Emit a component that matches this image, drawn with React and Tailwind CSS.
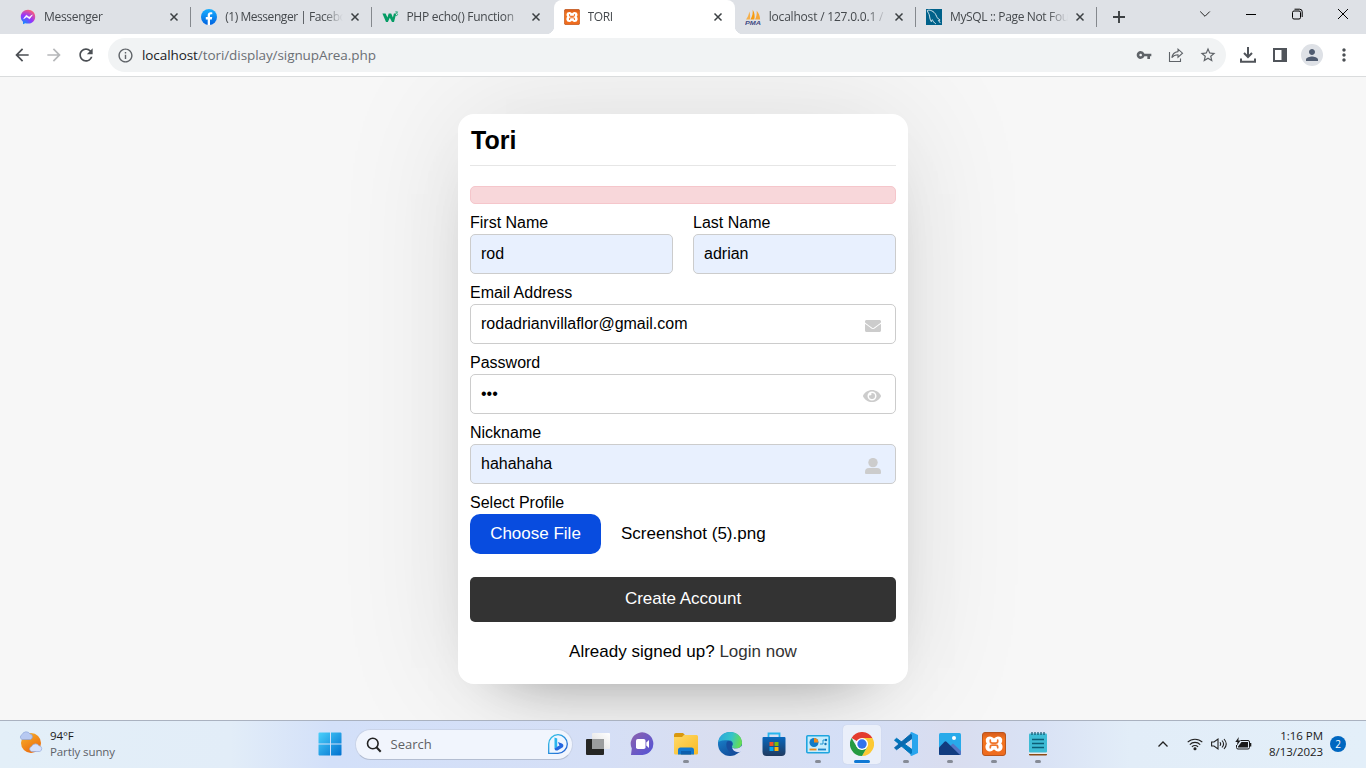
import React from "react";
import { MdArrowBack, MdArrowForward, MdRefresh, MdInfoOutline, MdVpnKey, MdStarBorder, MdPerson, MdMoreVert } from "react-icons/md";
import { FaEnvelope, FaEye } from "react-icons/fa";

function MessengerIcon() {
  return (
    <svg width="16" height="16" viewBox="0 0 16 16">
      <defs>
        <radialGradient id="msg" cx="0.2" cy="1" r="1.1">
          <stop offset="0" stopColor="#0695ff" />
          <stop offset="0.55" stopColor="#9334ff" />
          <stop offset="1" stopColor="#ff5f72" />
        </radialGradient>
      </defs>
      <path d="M8 .8C3.900.8.8 3.800.8 7.700c0 2.100.9 3.900 2.200 5.100v2.500l2.100-1.100c.9.300 1.900.4 2.900.4 4.100 0 7.200-2.900 7.200-6.900S12.100.8 8 .8z" fill="url(#msg)" />
      <path d="M3.700 9.700l2.600-3.500 2.800 2.100 3.200-2.400-2.700 3.900-2.800-2z" fill="#fff" stroke="#fff" strokeWidth=".7" strokeLinejoin="round" />
    </svg>
  );
}

function FacebookIcon() {
  return (
    <svg width="16" height="16" viewBox="0 0 16 16">
      <defs>
        <linearGradient id="fb" x1="0" y1="0" x2="0" y2="1">
          <stop offset="0" stopColor="#19afff" />
          <stop offset="1" stopColor="#0062e0" />
        </linearGradient>
      </defs>
      <circle cx="8" cy="8" r="8" fill="url(#fb)" />
      <path d="M6.700 16v-5.600H4.800V8h1.900V6.300c0-2 1.200-3.100 2.900-3.100.6 0 1.200.1 1.700.2v1.900h-1c-.9 0-1.300.5-1.300 1.100V8h2.200l-.4 2.400H9V16z" fill="#fff" />
    </svg>
  );
}

function W3Icon() {
  return (
    <svg width="17" height="16" viewBox="0 0 17 16">
      <path d="M.4 4.500h3.200l1.800 4 1.300-4h2.500l1.700 4 1-4h2.300L12 13h-2L7.800 8.800 5.900 13H4z" fill="#059c65" />
      <path d="M13.300 2.900h2.300l-1.200 1.400c1.500 0 1.600 2.300-.1 2.300-.6 0-1-.3-1.200-.6" fill="none" stroke="#059c65" strokeWidth=".8" />
    </svg>
  );
}

function XamppIcon({ size, id }) {
  return (
    <svg width={size} height={size} viewBox="0 0 24 24">
      <defs>
        <linearGradient id={id} x1="0" y1="0" x2="0" y2="1">
          <stop offset="0" stopColor="#d65a1c" />
          <stop offset="0.3" stopColor="#f4761f" />
          <stop offset="1" stopColor="#ee6a1e" />
        </linearGradient>
      </defs>
      <rect x=".5" y=".5" width="23" height="23" rx="2.500" fill={`url(#${id})`} stroke="#b9551d" />
      <path d="M8 6C4.900 6 4.200 9.200 6.700 11.600 3.800 14 4.700 18 8 18c2.300 0 2.500-2.100 4-2.100s1.700 2.100 4 2.100c3.300 0 4.200-4 1.300-6.400C19.800 9.200 19.100 6 16 6c-2.300 0-2.500 2-4 2s-1.700-2-4-2z" fill="#fff" stroke="#fff" strokeWidth="3" strokeLinejoin="round" />
      <path d="M8.300 8.200v1.300c0 1 .8 1.600 2 1.600h3.400c1.200 0 2-.6 2-1.600V8.200M8.300 15.700v-1c0-1 .8-1.600 2-1.600h3.400c1.200 0 2 .6 2 1.600v1" fill="none" stroke="#f0752a" strokeWidth="1.700" strokeLinecap="round" />
    </svg>
  );
}

function PmaIcon() {
  return (
    <svg width="16" height="16" viewBox="0 0 16 16">
      <path d="M1 10.400C3 8 4 5 4.200 2.500 5.300 5 5.400 8 4.800 10.400z" fill="#f5b04c" />
      <path d="M5.400 10.400C7.500 7.500 7.900 4 7.700.8c2 3 2.300 6.500 1.600 9.600z" fill="#f89c0e" />
      <path d="M10 10.400c1.500-2.500 2-5.500 1.700-8.600 2.200 2.300 3.300 5.600 3.400 8.600z" fill="#f6a83a" />
      <text x="0" y="15.900" fontFamily="Liberation Sans, sans-serif" fontSize="6" fontWeight="bold" fontStyle="italic" fill="#434a83" textLength="16" lengthAdjust="spacingAndGlyphs">PMA</text>
    </svg>
  );
}

function MysqlIcon() {
  return (
    <svg width="16" height="16" viewBox="0 0 16 16">
      <rect width="16" height="16" fill="#00618a" />
      <path d="M1.300 1.500c2.500-1 6.700.7 8.400 4 1.300 2.700 1.600 4 4.400 5.600l-1.700.4 2 2.600M1.300 1.500c.6 2.400 2 3.300 2.200 5.600.2 2 .8 4.100 1.800 5.600.2-1 .5-1.800 1-2 .7 1.300 1.500 3 3.600 4.200" fill="none" stroke="#e8f2f6" strokeWidth=".9" />
    </svg>
  );
}

function CloseX() {
  return (
    <svg width="16" height="16" viewBox="0 0 16 16" className="shrink-0">
      <path d="M4.500 4.500l7 7m0-7l-7 7" stroke="#3c4043" strokeWidth="1.500" />
    </svg>
  );
}

const tabs = [
  { title: "Messenger", icon: <MessengerIcon />, sep: true, track: "tracking-[-0.3px]" },
  { title: "(1) Messenger | Facebook", icon: <FacebookIcon />, sep: true, track: "tracking-[-0.45px]" },
  { title: "PHP echo() Function", icon: <W3Icon />, track: "tracking-[-0.25px]" },
  { title: "TORI", icon: <XamppIcon size={16} id="xt" />, active: true, track: "tracking-[-0.4px]" },
  { title: "localhost / 127.0.0.1 / tori", icon: <PmaIcon />, sep: true, track: "tracking-[-0.2px]" },
  { title: "MySQL :: Page Not Found", icon: <MysqlIcon />, sep: true, track: "tracking-[-0.35px]" },
];

function Tab({ tab }) {
  return (
    <div className={"relative flex h-[34px] w-[181.200px] shrink-0 items-center pl-[10px] " + (tab.active ? "rounded-t-lg bg-white" : "")}>
      {tab.active && (
        <>
          <div className="absolute bottom-0 -left-2 h-2 w-2 bg-[radial-gradient(circle_at_0_0,#dee1e6_8px,#ffffff_8.500px)]" />
          <div className="absolute -right-2 bottom-0 h-2 w-2 bg-[radial-gradient(circle_at_100%_0,#dee1e6_8px,#ffffff_8.500px)]" />
        </>
      )}
      <div className="flex w-6 shrink-0">{tab.icon}</div>
      <div className={"w-[118px] overflow-hidden text-[12px] whitespace-nowrap text-[#45494d] [mask-image:linear-gradient(to_right,#000_98px,transparent_118px)] " + tab.track}>{tab.title}</div>
      <div className="ml-[4px] flex"><CloseX /></div>
      {tab.sep && <div className="absolute top-[7px] right-0 h-5 w-px bg-[#84888d]" />}
      {tab.title.startsWith("(1)") && <div className="absolute top-[7px] right-0 h-5 w-px bg-[#84888d]" />}
    </div>
  );
}

function Browser() {
  return (
    <header className="shrink-0">
      <div className="flex h-[34px] bg-[#dee1e6] pl-[10px]">
        {tabs.map((t) => <Tab key={t.title} tab={t} />)}
        <div className="flex w-[44px] items-center justify-center">
          <svg width="14" height="14" viewBox="0 0 14 14"><path d="M7 1v12M1 7h12" stroke="#3c4043" strokeWidth="1.900" /></svg>
        </div>
        <div className="ml-auto flex items-start">
          <div className="flex h-7 w-[46px] items-center justify-center"><svg width="12" height="12" viewBox="0 0 12 12"><path d="M1.200 3.500L6 8.300l4.800-4.800" fill="none" stroke="#222" strokeWidth="1" /></svg></div>
          <div className="flex h-7 w-[46px] items-center justify-center"><svg width="12" height="12" viewBox="0 0 12 12"><path d="M1 6.500h10" stroke="#000" /></svg></div>
          <div className="flex h-7 w-[46px] items-center justify-center"><svg width="12" height="12" viewBox="0 0 12 12"><rect x="1.500" y="3" width="8" height="8" rx="1.500" fill="none" stroke="#000" /><path d="M3.500 1.200h5.200a2.500 2.500 0 0 1 2.500 2.500v5.300" fill="none" stroke="#000" /></svg></div>
          <div className="flex h-7 w-[46px] items-center justify-center"><svg width="12" height="12" viewBox="0 0 12 12"><path d="M1 1l10 10M11 1L1 11" stroke="#000" strokeWidth="1" /></svg></div>
        </div>
      </div>
      <div className="flex h-[43px] items-center border-b border-[#dadcdd] bg-white pl-3">
        <MdArrowBack className="size-5 text-[#4b4f54]" />
        <MdArrowForward className="ml-3 size-5 text-[#b6b8ba]" />
        <MdRefresh className="ml-3 size-5 text-[#4b4f54]" />
        <div className="ml-3 flex h-[34px] w-[1118px] items-center rounded-full bg-[#f1f3f4] pl-[9px]">
          <MdInfoOutline className="size-[17px] text-[#5f6368]" />
          <div className="ml-[8px] text-[13.500px] tracking-[-0.08px] whitespace-nowrap text-[#6b6f74]"><span className="text-[#202124]">localhost</span>/tori/display/signupArea.php</div>
          <div className="ml-auto flex items-center pr-[9px] text-[#5f6368]">
            <MdVpnKey className="size-4" />
            <svg className="ml-4" width="16" height="16" viewBox="0 0 16 16"><path d="M1.500 5v9.500h11v-3M10 2.200l4.500 4-4.500 4V7.800c-2.700 0-4.700.9-6.200 2.900.5-3.300 2.700-5.700 6.200-6.100z" fill="none" stroke="#5f6368" strokeWidth="1.100" /></svg>
            <MdStarBorder className="ml-[15px] size-[18px]" />
          </div>
        </div>
        <svg className="ml-[13px]" width="18" height="18" viewBox="0 0 18 18"><path d="M9 1v9.500M5 7l4 4 4-4M2 12.500v3.200h14v-3.200" fill="none" stroke="#50545a" strokeWidth="2" /></svg>
        <svg className="ml-[15px]" width="16" height="16" viewBox="0 0 16 16"><path d="M1 1h14v14H1zM3 3v10h6.500V3z" fill="#50545a" fillRule="evenodd" /></svg>
        <div className="ml-[13px] flex size-[22px] items-center justify-center rounded-full bg-[#dee1e6]"><MdPerson className="size-[18px] text-[#505c70]" /></div>
        <MdMoreVert className="ml-[11px] size-5 text-[#4b4f54]" />
      </div>
    </header>
  );
}

function Field({ label, value, filled, children, className = "" }) {
  return (
    <div className={"mt-2 " + className}>
      <div className="h-[22px] text-[16px] leading-[22px]">{label}</div>
      <div className={"flex h-10 items-center justify-between rounded-[5px] border border-[#ccc] pr-[14px] pl-[10px] " + (filled ? "bg-[#e8f0fe]" : "bg-white")}>
        <span className="text-[16px] leading-5">{value}</span>
        {children}
      </div>
    </div>
  );
}

function SignupCard() {
  return (
    <section className="h-[570px] w-[450px] rounded-2xl bg-white px-3 text-black shadow-[0_0_128px_0_rgba(0,0,0,0.1),0_32px_64px_-48px_rgba(0,0,0,0.5)]">
      <h1 className="h-[52px] border-b border-[#e6e6e6] pt-[11px] pl-px text-[25px] leading-[30px] font-semibold">Tori</h1>
      <div className="mt-5 h-[18px] rounded-[5px] border border-[#f5c6cb] bg-[#f8d7da]" />
      <div className="flex gap-5">
        <Field label="First Name" value="rod" filled className="flex-1" />
        <Field label="Last Name" value="adrian" filled className="flex-1" />
      </div>
      <Field label="Email Address" value="rodadrianvillaflor@gmail.com"><FaEnvelope className="relative top-[2px] size-4 text-[#ccc]" /></Field>
      <Field label="Password" value="•••"><FaEye className="relative top-[2px] h-4 w-[18px] text-[#ccc]" /></Field>
      <Field label="Nickname" value="hahahaha" filled>
        <svg className="relative top-[2px]" width="16" height="16" viewBox="0 0 16 16" fill="#ccc"><circle cx="8" cy="4.600" r="4.700" /><path d="M4 10h8a4 4 0 0 1 4 4v1a1 1 0 0 1-1 1H1a1 1 0 0 1-1-1v-1a4 4 0 0 1 4-4z" /></svg>
      </Field>
      <div className="mt-2 h-[22px] text-[16px] leading-[22px]">Select Profile</div>
      <div className="flex h-10 items-center text-[17px] leading-5">
        <button className="h-10 w-[131px] rounded-[10px] bg-[#084cdf] text-white">Choose File</button>
        <span className="ml-5">Screenshot (5).png</span>
      </div>
      <button className="mt-[23px] h-[45px] w-full rounded-[5px] bg-[#333] text-[17px] text-white">Create Account</button>
      <p className="mt-5 text-center text-[17px] leading-5">Already signed up? <a className="text-[#333]">Login now</a></p>
    </section>
  );
}

const WeatherIcon = () => (
  <svg width="26" height="26" viewBox="0 0 26 26">
    <defs><linearGradient id="sun" x1="0" y1="0" x2=".6" y2="1"><stop offset="0" stopColor="#f8b52c" /><stop offset="1" stopColor="#ec6b0c" /></linearGradient></defs>
    <circle cx="13" cy="13" r="10" fill="url(#sun)" />
    <path d="M4 9.500a2.600 2.600 0 0 1 0-4.800 4.500 4.500 0 0 1 8-.8A2.900 2.900 0 0 1 12.500 9.500z" fill="#b7c9f1" stroke="#8ea7dc" strokeWidth=".7" />
    <path d="M13.500 21.500a2.600 2.600 0 0 1 0-5 4.300 4.300 0 0 1 7.500-.8 3 3 0 0 1 .8 5.800z" fill="#d5e0fa" stroke="#92a9dc" strokeWidth=".7" />
  </svg>
);

const WindowsIcon = () => (
  <svg width="24" height="24" viewBox="0 0 24 24">
    <defs><linearGradient id="win" x1="0" y1="0" x2="1" y2="1"><stop offset="0" stopColor="#4ad0fb" /><stop offset="1" stopColor="#0070cf" /></linearGradient></defs>
    <path d="M1.500.5H12v11H.5v-10a1 1 0 0 1 1-1zM13 .5h9.500a1 1 0 0 1 1 1v10H13zM.5 12.500H12v11H1.500a1 1 0 0 1-1-1zM13 12.500h10.500v10a1 1 0 0 1-1 1H13z" fill="url(#win)" />
  </svg>
);

const BingIcon = () => (
  <svg width="22" height="22" viewBox="0 0 22 22">
    <defs><linearGradient id="bing" x1="0" y1="0" x2="1" y2="1"><stop offset="0" stopColor="#31c9ea" /><stop offset="1" stopColor="#2157cf" /></linearGradient></defs>
    <path d="M1.700 20.300V11a9.300 9.300 0 1 1 9.300 9.300z" fill="#eef6ff" stroke="url(#bing)" strokeWidth="1.300" />
    <path d="M7.500 4.500l2.700 1v8.200l-2.700 2z" fill="#2bb5ee" />
    <path d="M7.500 15.500l3-1.900 2-1-1.600-3.600 4 1.400c2.200 1 1.700 3.500.1 4.400l-4.500 2.600c-1.400.7-3-.4-3-1.900z" fill="#2466e0" />
  </svg>
);

const TaskViewIcon = () => (
  <svg width="24" height="24" viewBox="0 0 24 24">
    <defs><linearGradient id="tv" x1="1" y1="0" x2="0" y2="1"><stop offset="0" stopColor="#fff" /><stop offset="1" stopColor="#ddd" /></linearGradient></defs>
    <rect x="0" y="7" width="18" height="16" rx="1" fill="#252624" />
    <rect x="6" y="1" width="18" height="16" rx="1" fill="url(#tv)" />
    <path d="M6 7h12v10H6z" fill="#9b9d9e" />
  </svg>
);

const ChatIcon = () => (
  <svg width="24" height="24" viewBox="0 0 24 24">
    <defs><linearGradient id="chat" x1="0" y1="0" x2="1" y2="1"><stop offset="0" stopColor="#8d62ad" /><stop offset="1" stopColor="#5153d8" /></linearGradient></defs>
    <path d="M1 22.800l.8-6.300A11.300 11.300 0 1 1 12.500 23H1z" fill="url(#chat)" />
    <rect x="6" y="7" width="9.500" height="10" rx="1.800" fill="#fff" />
    <path d="M16.300 10.500L19 8v8l-2.700-2.500z" fill="#fff" />
  </svg>
);

const FolderIcon = () => (
  <svg width="26" height="24" viewBox="0 0 26 24">
    <defs><linearGradient id="fold" x1="0" y1="0" x2="1" y2="1"><stop offset="0" stopColor="#ffda68" /><stop offset="1" stopColor="#f9b924" /></linearGradient></defs>
    <path d="M1 3a2 2 0 0 1 2-2h7l2.500 2.500H11L9 6H1z" fill="#d9980e" />
    <path d="M1 5h8l2-2h12.500a1.500 1.500 0 0 1 1.500 1.500V21a1.500 1.500 0 0 1-1.500 1.500h-21A1.500 1.500 0 0 1 1 21z" fill="url(#fold)" />
    <path d="M5 22.500V18a2.500 2.500 0 0 1 2.500-2.500h11A2.500 2.500 0 0 1 21 18v4.500z" fill="#1379cf" />
    <path d="M8 19h10v3.500H8z" fill="#0c5fae" />
  </svg>
);

const EdgeIcon = () => (
  <svg width="24" height="24" viewBox="0 0 24 24">
    <defs>
      <linearGradient id="e1" x1="0" y1="0" x2="1" y2=".2"><stop offset="0" stopColor="#2aa4dd" /><stop offset=".6" stopColor="#35c4c8" /><stop offset="1" stopColor="#63dc58" /></linearGradient>
      <linearGradient id="e2" x1="0" y1="0" x2=".5" y2="1"><stop offset="0" stopColor="#1b8fd6" /><stop offset="1" stopColor="#124e9c" /></linearGradient>
    </defs>
    <circle cx="12" cy="12" r="12" fill="url(#e2)" />
    <path d="M.2 10C1.200 4 6 0 12 0c7 0 12 4.800 12 10.500 0 4-3 6-6 6s-4.700-1.500-3.700-2.800c1.200-1.700.7-5.500-4-5.500C6 8.200 2 8.500.2 10z" fill="url(#e1)" />
    <path d="M9 9.500c-2 4 .3 12 8.200 12.300 2.700 0 4.800-1.600 5.400-2.700-4.500 1.300-9-.5-9-4.300 0-1.500.8-1.500.8-3C14 9 11 8.200 9 9.500z" fill="#174f9f" />
    <path d="M14.200 14.200c-.8 1 .8 2.400 3.800 2.400 2.800 0 4.500-1.200 5.500-3 .8 1.500.6 4.300-.6 6-4 1.800-9.500-1-8.700-5.400z" fill="#d7def5" />
  </svg>
);

const StoreIcon = () => (
  <svg width="24" height="24" viewBox="0 0 24 24">
    <defs><linearGradient id="st" x1="0" y1="0" x2="0" y2="1"><stop offset="0" stopColor="#0867bd" /><stop offset="1" stopColor="#203a60" /></linearGradient></defs>
    <path d="M6.500 6V1.500h11V6" fill="none" stroke="#26b5ee" strokeWidth="1.800" />
    <path d="M1.500 5h21a1 1 0 0 1 1 1v14a4 4 0 0 1-4 4h-15a4 4 0 0 1-4-4V6a1 1 0 0 1 1-1z" fill="url(#st)" />
    <path d="M7.500 10h4v4h-4z" fill="#f15125" /><path d="M12.500 10h4v4h-4z" fill="#80bb09" /><path d="M7.500 15h4v4h-4z" fill="#04a7ef" /><path d="M12.500 15h4v4h-4z" fill="#fdb80a" />
  </svg>
);

const PanelIcon = () => (
  <svg width="24" height="24" viewBox="0 0 24 24">
    <rect x=".8" y="3.800" width="22.400" height="17" rx="1" fill="#c5ecfc" stroke="#1fa5df" strokeWidth="1.600" />
    <circle cx="8" cy="10.500" r="4.500" fill="#117bc6" /><path d="M8 10.500V6a4.500 4.500 0 0 1 4.500 4.500z" fill="#f28a18" />
    <path d="M14 12h3V8h3" stroke="#1f94d1" fill="none" /><circle cx="20" cy="8" r="1.200" fill="#1173b5" /><circle cx="19.500" cy="12" r="1.200" fill="#1173b5" />
    <path d="M3.500 17.500h7" stroke="#f28a18" strokeWidth="1.800" /><path d="M12 17.500h8" stroke="#1a85c9" strokeWidth="1.800" />
  </svg>
);

const ChromeIcon = () => (
  <svg width="24" height="24" viewBox="0 0 24 24">
    <path d="M12 12L1.600 6A12 12 0 0 1 22.400 6z" fill="#e33b2e" />
    <path d="M12 6h10.400A12 12 0 0 1 12 24l5.200-9z" fill="#fcc934" />
    <path d="M1.600 6A12 12 0 0 0 12 24l5.200-9L12 18l-5.200-3z" fill="#249a41" />
    <circle cx="12" cy="12" r="6.100" fill="#fff" /><circle cx="12" cy="12" r="4.700" fill="#3272ec" />
  </svg>
);

const CodeIcon = () => (
  <svg width="24" height="24" viewBox="0 0 24 24">
    <path d="M.5 8.200l2-1.900L18 17.500V23z" fill="#0076bd" stroke="#0076bd" strokeLinejoin="round" />
    <path d="M.5 15.800l2 1.900L18 6.500V1z" fill="#0869af" stroke="#0869af" strokeLinejoin="round" />
    <path d="M17.500 0L24 3v18l-6.500 3-1.500-1 2-2V3l-2-2z" fill="#28a5ee" />
  </svg>
);

const PhotosIcon = () => (
  <svg width="24" height="24" viewBox="0 0 24 24">
    <rect x="1" y="1" width="22" height="22" rx="1.500" fill="#28aaea" />
    <path d="M12 14l3-2.500 8 7.500v3a1 1 0 0 1-1 1H12z" fill="#5476c5" />
    <path d="M1 15.500l5.500-5.800a1.500 1.500 0 0 1 2 0L22 23H2a1 1 0 0 1-1-1z" fill="#123c80" />
    <circle cx="16" cy="6" r="2" fill="#fff" />
  </svg>
);

const NotepadIcon = () => (
  <svg width="24" height="24" viewBox="0 0 24 24">
    <path d="M3 20h18v2.500a1 1 0 0 1-1 1H4a1 1 0 0 1-1-1z" fill="#8b4b16" /><path d="M3 19h18v3H3z" fill="#e8ebed" />
    <rect x="3" y="1.500" width="18" height="19" rx="1" fill="#3dbcd5" />
    <path d="M6 0v3M9 0v3M12 0v3M15 0v3M18 0v3" stroke="#12546c" strokeWidth="1.200" />
    <path d="M6 7.500h12M6 11.500h12M6 15.500h12" stroke="#0c5e77" strokeWidth="1.500" />
  </svg>
);

const apps = [
  { name: "taskview", icon: <TaskViewIcon /> },
  { name: "chat", icon: <ChatIcon /> },
  { name: "files", icon: <FolderIcon />, dot: true },
  { name: "edge", icon: <EdgeIcon /> },
  { name: "store", icon: <StoreIcon /> },
  { name: "panel", icon: <PanelIcon />, dot: true },
  { name: "chrome", icon: <ChromeIcon />, active: true },
  { name: "code", icon: <CodeIcon />, dot: true },
  { name: "photos", icon: <PhotosIcon />, dot: true },
  { name: "xampp", icon: <XamppIcon size={24} id="xb" />, dot: true },
  { name: "notepad", icon: <NotepadIcon />, dot: true },
];

function Taskbar() {
  return (
    <footer className="flex h-12 shrink-0 border-t border-[#aab2c0] bg-[linear-gradient(90deg,#e3eff8_0px,#e2edf8_230px,#d3e0f9_330px,#d5dff6_600px,#d9def0_720px,#d4dff7_850px,#d9ddef_950px,#d9e2f5_1040px,#e2edf8_1130px,#e3eff9_1366px)]">
      <div className="flex w-[307.500px] pt-[9px] pl-[18px]">
        <WeatherIcon />
        <div className="ml-[6px] text-[11.500px] leading-4 tracking-[-0.1px]">
          <div className="-mt-[2px] text-[#1b1b1b]">94°F</div>
          <div className="text-[#5d6268]">Partly sunny</div>
        </div>
      </div>
      <div className="flex w-11 justify-center pt-[11px]"><WindowsIcon /></div>
      <div className="flex w-56 items-center pl-[3.500px]">
        <div className="flex h-[31px] w-[218px] items-center rounded-full border border-b-[#b4bed2] border-[#c9d3e8] bg-[#f1f5fd] pr-[3px] pl-[9.500px]">
          <svg width="16" height="16" viewBox="0 0 16 16"><circle cx="6.800" cy="6.500" r="5.300" fill="none" stroke="#222" strokeWidth="1.600" /><path d="M10.700 10.500l4 4.300" stroke="#222" strokeWidth="2" /></svg>
          <span className="ml-[9px] text-[13px] text-[#5f6164]">Search</span>
          <span className="ml-auto pb-px"><BingIcon /></span>
        </div>
      </div>
      {apps.map((a) => (
        <div key={a.name} className="flex w-11 justify-center pl-px">
          <div className={"mt-1 flex h-[39px] w-[38px] flex-col items-center rounded pt-[7px] " + (a.active ? "bg-[#eaeffa] shadow-[0_0_1px_#b8c2d6]" : "")}>
            <div className="-mt-[0.500px] flex">{a.icon}</div>
            {a.active && <div className="mt-[4px] h-[3px] w-4 shrink-0 rounded-full bg-[#0f78d4]" />}
            {a.dot && <div className="mt-[4px] h-[3px] w-[6px] shrink-0 rounded-full bg-[#868b96]" />}
          </div>
        </div>
      ))}
      <div className="ml-auto flex items-center pr-[20px] pb-[2px] text-[#1b1b1b]">
        <svg width="12" height="12" viewBox="0 0 12 12"><path d="M1.500 8.500L6 4l4.500 4.500" fill="none" stroke="#222" strokeWidth="1.300" /></svg>
        <svg className="ml-[18px]" width="16" height="14" viewBox="0 0 16 14" fill="none" stroke="#222" strokeWidth="1.100"><path d="M.7 5.200a10.400 10.400 0 0 1 14.600 0M2.800 7.600a7.300 7.300 0 0 1 10.400 0M4.900 9.900a4.400 4.400 0 0 1 6.200 0" /><circle cx="8" cy="11.700" r="1" fill="#222" /></svg>
        <svg className="ml-[8px]" width="16" height="14" viewBox="0 0 16 14" fill="none" stroke="#222" strokeWidth="1.100"><path d="M.6 5v4h2.400L7 12V2L3 5zM9 5.200c.8 1.100.8 2.500 0 3.600M11 3.500c1.800 2 1.800 5 0 7M13 2c2.700 3 2.700 7 0 10" /></svg>
        <svg className="ml-[8px]" width="17" height="14" viewBox="0 0 17 14"><path d="M5.500 3.500h7.500a1.500 1.500 0 0 1 1.500 1.500v5.500a1.500 1.500 0 0 1-1.500 1.500H3A1.500 1.500 0 0 1 1.500 10.500V8" fill="none" stroke="#1b1b1b" /><path d="M3 9.500L6.500 5H13v5.500H3zM15 6h1.300v3.500H15z" fill="#1b1b1b" /><path d="M3.800 0L.3 5h2.200l-.6 3.600L5.600 3.500H3.300z" fill="#1b1b1b" /></svg>
        <div className="ml-[7px] w-[64px] text-right text-[11.500px] leading-4 tracking-[-0.05px] whitespace-nowrap"><div>1:16 PM</div><div>8/13/2023</div></div>
        <div className="ml-[7px] flex size-4 items-center justify-center rounded-full bg-[#0067c0] text-[10px] leading-none text-white">2</div>
      </div>
    </footer>
  );
}

export default function App() {
  return (
    <div className="flex h-[768px] w-[1366px] flex-col overflow-hidden font-['Open_Sans',sans-serif]">
      <Browser />
      <main className="flex min-h-0 flex-1 items-center justify-center overflow-hidden bg-[#f7f7f7] font-['Liberation_Sans',Arial,sans-serif]">
        <SignupCard />
      </main>
      <Taskbar />
    </div>
  );
}
